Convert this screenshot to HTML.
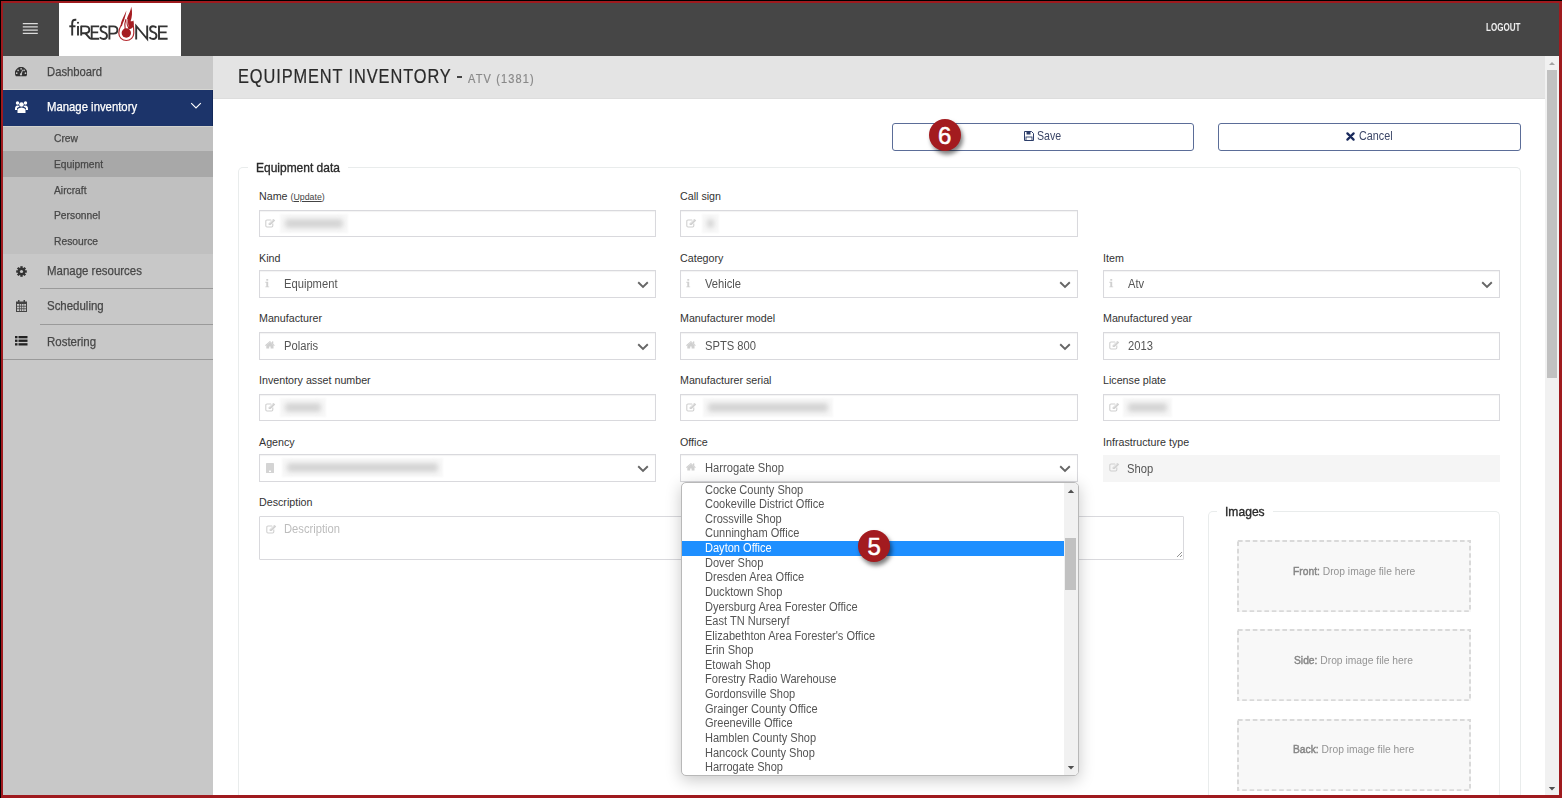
<!DOCTYPE html>
<html><head><meta charset="utf-8"><style>
html,body{margin:0;padding:0}
body{width:1562px;height:798px;overflow:hidden;background:#000;position:relative;font-family:"Liberation Sans", sans-serif}
.b{position:absolute}
.t{position:absolute;white-space:nowrap}
</style></head><body>
<div class="b" style="left:1px;top:1px;width:1561px;height:797px;background:#9f1a1e"></div>
<div class="b" style="left:3px;top:3px;width:1556px;height:53px;background:#464646"></div>
<svg class="b" style="left:22px;top:20px" width="17" height="16"><g stroke="#dcdcdc" stroke-width="1.25"><path d="M0.8 3.6 H15.8 M0.8 6.85 H15.8 M0.8 10.1 H15.8 M0.8 13.4 H15.8"/></g></svg>
<div class="b" style="left:59px;top:3px;width:122px;height:53px;background:#fff"></div>
<svg class="b" style="left:59px;top:3px" width="122" height="52" viewBox="59 3 122 52">
<g fill="none" stroke="#333" stroke-width="1.9" stroke-linecap="butt" stroke-linejoin="miter">
<path d="M72.2 35.6 V23.2 Q72.2 19.8 75.3 19.8 H76.3"/><path d="M69.3 26.3 H75.5"/>
<path d="M78 26 V35.6"/><circle cx="78" cy="22.8" r="1.05" fill="#333" stroke="none"/>
<path d="M81.2 25.7 V35.6"/><path d="M81.2 26.4 H85.4 Q89.3 26.4 89.3 29.8 Q89.3 33.2 85.4 33.2 H81.6"/>
<path d="M85.2 33.2 L89.6 38 Q90.4 38.8 91.8 38.8 H99.2"/>
<path d="M99.2 26.4 H91.7 V38.8 M91.7 32.4 H98.2"/>
<path d="M106.9 27.6 Q105.6 26.2 103.5 26.2 Q100.6 26.2 100.6 29 Q100.6 31.2 103.6 32.2 Q107 33.2 107 35.8 Q107 39 103.6 39 Q101.1 39 99.9 37.3"/>
<path d="M109.4 39.4 V26.4 H113.4 Q117.4 26.4 117.4 30 Q117.4 33.6 113.4 33.6 H109.4"/>
<path d="M136.2 39.4 V26 L147.2 39 V25.6"/>
<path d="M156.4 27.6 Q155.1 26.2 153 26.2 Q150.1 26.2 150.1 29 Q150.1 31.2 153.1 32.2 Q156.5 33.2 156.5 35.8 Q156.5 39 153.1 39 Q150.6 39 149.4 37.3"/>
<path d="M167.6 26.4 H159 V38.8 H167.6 M159 32.4 H166.6"/>
</g>
<path d="M121.2 25 C119.6 27.8 118.8 30.5 118.8 33 A7.5 7.5 0 0 0 133.8 33 C133.8 30.2 133.6 27.8 133.3 25.5" fill="none" stroke="#b52c31" stroke-width="1.2"/>
<circle cx="126.3" cy="33" r="4.7" fill="#a51d22"/>
<path d="M120.8 25.7 C120.6 21 124.2 16.5 126.3 10.4 C126.2 13.5 125.2 16 124.6 18.5 C124 21 122.6 23.5 121.8 26.5 Z" fill="#a51d22"/>
<path d="M133.6 26.5 C134.1 24.5 133.9 22.3 133.4 20.4 C132.6 21.1 131.6 21.4 130.6 21.2 C132.1 17 132.6 12 131.3 6.7 C130.6 11 128.6 14 127.5 17 C126.6 19.5 126.3 22.5 126.8 25 C127.3 26.5 128.3 28 128.6 29.5 C130.5 29 132.5 28 133.6 26.5 Z" fill="#a51d22"/>
<path d="M125.2 29 C124.6 25.5 124.8 22 125.9 19.3" fill="none" stroke="#a51d22" stroke-width="1.1"/>
<path d="M127.6 19 C127.2 21.5 127.6 24 128.6 26.5" fill="none" stroke="#fff" stroke-width="0.6" opacity="0.8"/>
</svg>
<div class="t" style="left:1486px;top:22.00px;font-size:10.2px;line-height:12px;color:#eeeeee;font-weight:bold;letter-spacing:0px;transform:scaleX(0.79);transform-origin:0 0;">LOGOUT</div>
<div class="b" style="left:3px;top:56px;width:210px;height:739px;background:#c8c8c8"></div>
<div class="b" style="left:3px;top:90px;width:209px;height:36px;background:#1c346a"></div>
<div class="b" style="left:212px;top:90px;width:1px;height:36px;background:#14295a"></div>
<div class="b" style="left:3px;top:126px;width:210px;height:128px;background:#c0c0c0"></div>
<div class="b" style="left:3px;top:89px;width:210px;height:1px;background:#d6d6d2"></div>
<div class="b" style="left:3px;top:126px;width:210px;height:1px;background:#d2d2ce"></div>
<div class="b" style="left:3px;top:151px;width:210px;height:26px;background:#a8a8a8"></div>
<div class="b" style="left:40px;top:288px;width:173px;height:1px;background:#9a9a9a"></div>
<div class="b" style="left:40px;top:324px;width:173px;height:1px;background:#9a9a9a"></div>
<div class="b" style="left:3px;top:359px;width:210px;height:1px;background:#9a9a9a"></div>
<div class="t" style="left:47.2px;top:65.00px;font-size:12.6px;line-height:15px;color:#474747;font-weight:normal;letter-spacing:0px;transform:scaleX(0.895);transform-origin:0 0;-webkit-text-stroke:0.25px #474747">Dashboard</div>
<div class="t" style="left:47.2px;top:100.00px;font-size:12.6px;line-height:15px;color:#ffffff;font-weight:normal;letter-spacing:0px;transform:scaleX(0.9);transform-origin:0 0;-webkit-text-stroke:0.25px #fff">Manage inventory</div>
<div class="t" style="left:53.5px;top:132.00px;font-size:10.6px;line-height:13px;color:#474747;font-weight:normal;letter-spacing:0px;transform:scaleX(0.97);transform-origin:0 0;-webkit-text-stroke:0.25px #474747">Crew</div>
<div class="t" style="left:53.5px;top:158.00px;font-size:10.6px;line-height:13px;color:#474747;font-weight:normal;letter-spacing:0px;transform:scaleX(0.97);transform-origin:0 0;-webkit-text-stroke:0.25px #474747">Equipment</div>
<div class="t" style="left:53.5px;top:184.00px;font-size:10.6px;line-height:13px;color:#474747;font-weight:normal;letter-spacing:0px;transform:scaleX(0.97);transform-origin:0 0;-webkit-text-stroke:0.25px #474747">Aircraft</div>
<div class="t" style="left:53.5px;top:209.00px;font-size:10.6px;line-height:13px;color:#474747;font-weight:normal;letter-spacing:0px;transform:scaleX(0.97);transform-origin:0 0;-webkit-text-stroke:0.25px #474747">Personnel</div>
<div class="t" style="left:53.5px;top:235.00px;font-size:10.6px;line-height:13px;color:#474747;font-weight:normal;letter-spacing:0px;transform:scaleX(0.97);transform-origin:0 0;-webkit-text-stroke:0.25px #474747">Resource</div>
<div class="t" style="left:47.2px;top:264.00px;font-size:12.6px;line-height:15px;color:#474747;font-weight:normal;letter-spacing:0px;transform:scaleX(0.91);transform-origin:0 0;-webkit-text-stroke:0.25px #474747">Manage resources</div>
<div class="t" style="left:47.2px;top:299.00px;font-size:12.6px;line-height:15px;color:#474747;font-weight:normal;letter-spacing:0px;transform:scaleX(0.91);transform-origin:0 0;-webkit-text-stroke:0.25px #474747">Scheduling</div>
<div class="t" style="left:47.2px;top:335.00px;font-size:12.6px;line-height:15px;color:#474747;font-weight:normal;letter-spacing:0px;transform:scaleX(0.91);transform-origin:0 0;-webkit-text-stroke:0.25px #474747">Rostering</div>
<svg class="b" style="left:15.2px;top:67.4px" width="12.2" height="9.3" viewBox="0 0 12.2 9.3">
<path d="M0.91 9.3 A6.1 6.1 0 1 1 11.29 9.3 Z" fill="#333"/>
<g fill="#c8c8c8"><circle cx="6.1" cy="1.8" r="0.85"/><circle cx="3.1" cy="3.3" r="0.85"/><circle cx="9.1" cy="3.3" r="0.85"/>
<circle cx="1.7" cy="6.2" r="0.85"/><circle cx="10.5" cy="6.2" r="0.85"/><circle cx="6" cy="7.4" r="1.1"/>
<path d="M5.5 7.2 L7.3 2.6 L8 2.9 L6.6 7.6Z"/></g>
</svg>
<svg class="b" style="left:15px;top:101px" width="13" height="12" viewBox="0 0 13 12">
<circle cx="6.5" cy="3.5" r="2.3" fill="#fff"/><circle cx="2.5" cy="2" r="1.7" fill="#fff"/><circle cx="10.5" cy="2" r="1.7" fill="#fff"/>
<path d="M2.5 12 L2.5 8 Q6.5 5 10.5 8 L10.5 12Z" fill="#fff"/>
<path d="M0 8 Q0 4.5 2.5 4.5 Q4.2 4.5 4.5 5.5 L2 7 L2 9 L0 9Z" fill="#fff"/>
<path d="M13 8 Q13 4.5 10.5 4.5 Q8.8 4.5 8.5 5.5 L11 7 L11 9 L13 9Z" fill="#fff"/>
</svg>
<svg class="b" style="left:16px;top:265.5px" width="11" height="11" viewBox="0 0 11 11">
<g fill="#333" transform="translate(5.5 5.5)">
<rect x="-1.2" y="-5.3" width="2.4" height="10.6"/><rect x="-1.2" y="-5.3" width="2.4" height="10.6" transform="rotate(45)"/>
<rect x="-1.2" y="-5.3" width="2.4" height="10.6" transform="rotate(90)"/><rect x="-1.2" y="-5.3" width="2.4" height="10.6" transform="rotate(135)"/>
<circle r="3.8"/></g><circle cx="5.5" cy="5.5" r="1.6" fill="#c8c8c8"/>
</svg>
<svg class="b" style="left:16px;top:299.5px" width="11" height="12" viewBox="0 0 11 12">
<rect x="0" y="1.5" width="11" height="10.5" fill="#444"/>
<rect x="2" y="0" width="1.5" height="3" fill="#444"/><rect x="7.5" y="0" width="1.5" height="3" fill="#444"/>
<g fill="#c8c8c8"><rect x="1" y="4" width="2" height="1.8"/><rect x="3.7" y="4" width="1.6" height="1.8"/><rect x="6" y="4" width="1.6" height="1.8"/><rect x="8.2" y="4" width="1.8" height="1.8"/>
<rect x="1" y="6.6" width="2" height="1.8"/><rect x="3.7" y="6.6" width="1.6" height="1.8"/><rect x="6" y="6.6" width="1.6" height="1.8"/><rect x="8.2" y="6.6" width="1.8" height="1.8"/>
<rect x="1" y="9.2" width="2" height="1.8"/><rect x="3.7" y="9.2" width="1.6" height="1.8"/><rect x="6" y="9.2" width="1.6" height="1.8"/><rect x="8.2" y="9.2" width="1.8" height="1.8"/></g>
</svg>
<svg class="b" style="left:15px;top:336px" width="13" height="10" viewBox="0 0 13 10">
<g fill="#222"><rect x="0" y="0" width="2.5" height="2.3"/><rect x="3.5" y="0" width="9" height="2.3"/>
<rect x="0" y="3.6" width="2.5" height="2.3"/><rect x="3.5" y="3.6" width="9" height="2.3"/>
<rect x="0" y="7.2" width="2.5" height="2.3"/><rect x="3.5" y="7.2" width="9" height="2.3"/></g>
</svg>
<svg class="b" style="left:190px;top:102px" width="12" height="8" viewBox="0 0 12 8">
<path d="M1.2 1.2 L6 6 L10.8 1.2" fill="none" stroke="#fff" stroke-width="1.15"/></svg>
<div class="b" style="left:213px;top:56px;width:1332px;height:42px;background:#e4e4e4"></div>
<div class="b" style="left:213px;top:99px;width:1332px;height:696px;background:#fff"></div>
<div class="b" style="left:213px;top:98px;width:1332px;height:1px;background:#dddddd"></div>
<div class="t" style="left:237.6px;top:65.00px;font-size:19.3px;line-height:23px;color:#2a2a2a;font-weight:normal;letter-spacing:1.05px;transform:scaleX(0.85);transform-origin:0 0;-webkit-text-stroke:0.2px #2a2a2a">EQUIPMENT INVENTORY</div>
<div class="b" style="left:457.3px;top:76.4px;width:5px;height:2px;background:#444"></div>
<div class="t" style="left:468px;top:72.00px;font-size:12.2px;line-height:15px;color:#888;font-weight:normal;letter-spacing:1.27px;transform:scaleX(0.9);transform-origin:0 0;-webkit-text-stroke:0.2px #888">ATV (1381)</div>
<div class="b" style="left:1545px;top:56px;width:14px;height:739px;background:#f1f1f1"></div>
<div class="b" style="left:1547px;top:70px;width:10px;height:308px;background:#c1c1c1"></div>
<svg class="b" style="left:1547px;top:59px" width="10" height="8"><path d="M2 6 L5 3 L8 6Z" fill="#a3a3a3"/></svg>
<svg class="b" style="left:1547px;top:784.5px" width="10" height="8"><path d="M1.8 2 L5 5.4 L8.2 2Z" fill="#505050"/></svg>
<div class="b" style="left:892px;top:123px;width:302px;height:28px;border:1px solid #5b6d98;border-radius:3px;box-sizing:border-box"></div>
<div class="b" style="left:1218px;top:123px;width:303px;height:28px;border:1px solid #5b6d98;border-radius:3px;box-sizing:border-box"></div>
<svg class="b" style="left:1024px;top:131px" width="10" height="10" viewBox="0 0 10 10">
<path d="M0.5 0.5 H7.5 L9.5 2.5 V9.5 H0.5 Z" fill="none" stroke="#2d3e6a" stroke-width="1"/>
<rect x="2.5" y="0.5" width="4" height="3" fill="#2d3e6a"/><rect x="2" y="6" width="6" height="3.5" fill="none" stroke="#2d3e6a" stroke-width="0.9"/>
</svg>
<div class="t" style="left:1037.3px;top:129.00px;font-size:12.2px;line-height:15px;color:#3c4768;font-weight:normal;letter-spacing:0px;transform:scaleX(0.87);transform-origin:0 0;">Save</div>
<svg class="b" style="left:1346.3px;top:131.8px" width="9" height="9" viewBox="0 0 9 9">
<path d="M1.4 1.4 L7.6 7.6 M7.6 1.4 L1.4 7.6" stroke="#1a2a5c" stroke-width="2.2" stroke-linecap="round"/></svg>
<div class="t" style="left:1358.6px;top:129.00px;font-size:12.3px;line-height:15px;color:#3c4768;font-weight:normal;letter-spacing:0px;transform:scaleX(0.877);transform-origin:0 0;">Cancel</div>
<div class="b" style="left:238px;top:167px;width:1283px;height:628px;border:1px solid #e9ecec;border-bottom:none;border-radius:5px 5px 0 0;box-sizing:border-box"></div>
<div class="b" style="left:248px;top:160px;width:100px;height:12px;background:#fff"></div>
<div class="t" style="left:255.6px;top:160.00px;font-size:13.2px;line-height:16px;color:#2a2a2a;font-weight:normal;letter-spacing:0px;transform:scaleX(0.908);transform-origin:0 0;-webkit-text-stroke:0.35px #2a2a2a">Equipment data</div>
<div class="t" style="left:259px;top:190.00px;font-size:10.7px;line-height:13px;color:#333;font-weight:normal;letter-spacing:0px;">Name <span style="font-size:8.8px;color:#444">(<u>Update</u>)</span></div>
<div class="b" style="left:259px;top:210px;width:397px;height:27px;border:1px solid #d9d9dd;box-sizing:border-box;background:#fff;box-shadow:inset 0 1px 1px rgba(0,0,0,0.05)"></div>
<svg class="b" style="left:264.8px;top:218.5px" width="11" height="9" viewBox="0 0 11 9">
<path d="M6.2 1 H2 Q0.8 1 0.8 2.2 V6.8 Q0.8 8 2 8 H6.6 Q7.8 8 7.8 6.8 V4.6" fill="none" stroke="#d0d0d0" stroke-width="1.1"/>
<path d="M3.6 6 L3.9 4.3 L8.4 -0.2 L10.2 1.4 L5.6 5.9 Z" fill="#d0d0d0"/><path d="M4.6 4.6 L8.6 0.6" stroke="#fff" stroke-width="0.5"/></svg>
<div class="b" style="left:279.5px;top:214px;width:68.5px;height:18.5px;background:#f8f8f8;filter:blur(0.8px)"></div>
<div class="b" style="left:284.5px;top:219px;width:58.5px;height:9px;background:#d4d4d4;filter:blur(2.4px);border-radius:3px"></div>
<div class="t" style="left:680px;top:190.00px;font-size:10.7px;line-height:13px;color:#333;font-weight:normal;letter-spacing:0px;">Call sign</div>
<div class="b" style="left:680px;top:210px;width:398px;height:27px;border:1px solid #d9d9dd;box-sizing:border-box;background:#fff;box-shadow:inset 0 1px 1px rgba(0,0,0,0.05)"></div>
<svg class="b" style="left:685.8px;top:218.5px" width="11" height="9" viewBox="0 0 11 9">
<path d="M6.2 1 H2 Q0.8 1 0.8 2.2 V6.8 Q0.8 8 2 8 H6.6 Q7.8 8 7.8 6.8 V4.6" fill="none" stroke="#d0d0d0" stroke-width="1.1"/>
<path d="M3.6 6 L3.9 4.3 L8.4 -0.2 L10.2 1.4 L5.6 5.9 Z" fill="#d0d0d0"/><path d="M4.6 4.6 L8.6 0.6" stroke="#fff" stroke-width="0.5"/></svg>
<div class="b" style="left:702px;top:214px;width:16.5px;height:18.5px;background:#f8f8f8;filter:blur(0.8px)"></div>
<div class="b" style="left:707px;top:219px;width:6.5px;height:9px;background:#d4d4d4;filter:blur(2.4px);border-radius:3px"></div>
<div class="t" style="left:259px;top:252.00px;font-size:10.7px;line-height:13px;color:#333;font-weight:normal;letter-spacing:0px;">Kind</div>
<div class="b" style="left:259px;top:270px;width:397px;height:28px;border:1px solid #d9d9dd;box-sizing:border-box;background:#fff;box-shadow:inset 0 1px 1px rgba(0,0,0,0.05)"></div>
<svg class="b" style="left:265.3px;top:279px" width="5" height="9" viewBox="0 0 5 9">
<rect x="1.3" y="0" width="1.9" height="1.7" fill="#d0d0d0"/><path d="M0.3 2.8 H3.2 V7.4 H4.2 V8.3 H0.3 V7.4 H1.3 V3.7 H0.3Z" fill="#d0d0d0"/></svg>
<div class="t" style="left:284.3px;top:277.00px;font-size:12.3px;line-height:15px;color:#555;font-weight:normal;letter-spacing:0px;transform:scaleX(0.91);transform-origin:0 0;">Equipment</div>
<svg class="b" style="left:636.5px;top:281px" width="12" height="8" viewBox="0 0 12 8">
<path d="M1.2 1.2 L6 5.9 L10.8 1.2" fill="none" stroke="#666" stroke-width="1.9"/></svg>
<div class="t" style="left:680px;top:252.00px;font-size:10.7px;line-height:13px;color:#333;font-weight:normal;letter-spacing:0px;">Category</div>
<div class="b" style="left:680px;top:270px;width:398px;height:28px;border:1px solid #d9d9dd;box-sizing:border-box;background:#fff;box-shadow:inset 0 1px 1px rgba(0,0,0,0.05)"></div>
<svg class="b" style="left:686.3px;top:279px" width="5" height="9" viewBox="0 0 5 9">
<rect x="1.3" y="0" width="1.9" height="1.7" fill="#d0d0d0"/><path d="M0.3 2.8 H3.2 V7.4 H4.2 V8.3 H0.3 V7.4 H1.3 V3.7 H0.3Z" fill="#d0d0d0"/></svg>
<div class="t" style="left:705.3px;top:277.00px;font-size:12.3px;line-height:15px;color:#555;font-weight:normal;letter-spacing:0px;transform:scaleX(0.91);transform-origin:0 0;">Vehicle</div>
<svg class="b" style="left:1058.5px;top:281px" width="12" height="8" viewBox="0 0 12 8">
<path d="M1.2 1.2 L6 5.9 L10.8 1.2" fill="none" stroke="#666" stroke-width="1.9"/></svg>
<div class="t" style="left:1103px;top:252.00px;font-size:10.7px;line-height:13px;color:#333;font-weight:normal;letter-spacing:0px;">Item</div>
<div class="b" style="left:1103px;top:270px;width:397px;height:28px;border:1px solid #d9d9dd;box-sizing:border-box;background:#fff;box-shadow:inset 0 1px 1px rgba(0,0,0,0.05)"></div>
<svg class="b" style="left:1109.3px;top:279px" width="5" height="9" viewBox="0 0 5 9">
<rect x="1.3" y="0" width="1.9" height="1.7" fill="#d0d0d0"/><path d="M0.3 2.8 H3.2 V7.4 H4.2 V8.3 H0.3 V7.4 H1.3 V3.7 H0.3Z" fill="#d0d0d0"/></svg>
<div class="t" style="left:1128.3px;top:277.00px;font-size:12.3px;line-height:15px;color:#555;font-weight:normal;letter-spacing:0px;transform:scaleX(0.91);transform-origin:0 0;">Atv</div>
<svg class="b" style="left:1480.5px;top:281px" width="12" height="8" viewBox="0 0 12 8">
<path d="M1.2 1.2 L6 5.9 L10.8 1.2" fill="none" stroke="#666" stroke-width="1.9"/></svg>
<div class="t" style="left:259px;top:312.00px;font-size:10.7px;line-height:13px;color:#333;font-weight:normal;letter-spacing:0px;">Manufacturer</div>
<div class="b" style="left:259px;top:332px;width:397px;height:28px;border:1px solid #d9d9dd;box-sizing:border-box;background:#fff;box-shadow:inset 0 1px 1px rgba(0,0,0,0.05)"></div>
<svg class="b" style="left:265.2px;top:341.3px" width="10" height="8" viewBox="0 0 10 8">
<path d="M0 4.2 L4.9 0 L9.8 4.2 L9.1 4.9 L4.9 1.3 L0.7 4.9Z" fill="#d0d0d0"/><path d="M1.3 4.2 L4.9 1.2 L8.5 4.2 V7.6 H5.6 V5.6 H4.2 V7.6 H1.3Z" fill="#d0d0d0"/><rect x="7" y="0.4" width="1.3" height="2.4" fill="#d0d0d0"/></svg>
<div class="t" style="left:284.3px;top:339.00px;font-size:12.3px;line-height:15px;color:#555;font-weight:normal;letter-spacing:0px;transform:scaleX(0.91);transform-origin:0 0;">Polaris</div>
<svg class="b" style="left:636.5px;top:343px" width="12" height="8" viewBox="0 0 12 8">
<path d="M1.2 1.2 L6 5.9 L10.8 1.2" fill="none" stroke="#666" stroke-width="1.9"/></svg>
<div class="t" style="left:680px;top:312.00px;font-size:10.7px;line-height:13px;color:#333;font-weight:normal;letter-spacing:0px;">Manufacturer model</div>
<div class="b" style="left:680px;top:332px;width:398px;height:28px;border:1px solid #d9d9dd;box-sizing:border-box;background:#fff;box-shadow:inset 0 1px 1px rgba(0,0,0,0.05)"></div>
<svg class="b" style="left:686.2px;top:341.3px" width="10" height="8" viewBox="0 0 10 8">
<path d="M0 4.2 L4.9 0 L9.8 4.2 L9.1 4.9 L4.9 1.3 L0.7 4.9Z" fill="#d0d0d0"/><path d="M1.3 4.2 L4.9 1.2 L8.5 4.2 V7.6 H5.6 V5.6 H4.2 V7.6 H1.3Z" fill="#d0d0d0"/><rect x="7" y="0.4" width="1.3" height="2.4" fill="#d0d0d0"/></svg>
<div class="t" style="left:705.3px;top:339.00px;font-size:12.3px;line-height:15px;color:#555;font-weight:normal;letter-spacing:0px;transform:scaleX(0.91);transform-origin:0 0;">SPTS 800</div>
<svg class="b" style="left:1058.5px;top:343px" width="12" height="8" viewBox="0 0 12 8">
<path d="M1.2 1.2 L6 5.9 L10.8 1.2" fill="none" stroke="#666" stroke-width="1.9"/></svg>
<div class="t" style="left:1103px;top:312.00px;font-size:10.7px;line-height:13px;color:#333;font-weight:normal;letter-spacing:0px;">Manufactured year</div>
<div class="b" style="left:1103px;top:332px;width:397px;height:28px;border:1px solid #d9d9dd;box-sizing:border-box;background:#fff;box-shadow:inset 0 1px 1px rgba(0,0,0,0.05)"></div>
<svg class="b" style="left:1108.8px;top:340.5px" width="11" height="9" viewBox="0 0 11 9">
<path d="M6.2 1 H2 Q0.8 1 0.8 2.2 V6.8 Q0.8 8 2 8 H6.6 Q7.8 8 7.8 6.8 V4.6" fill="none" stroke="#d0d0d0" stroke-width="1.1"/>
<path d="M3.6 6 L3.9 4.3 L8.4 -0.2 L10.2 1.4 L5.6 5.9 Z" fill="#d0d0d0"/><path d="M4.6 4.6 L8.6 0.6" stroke="#fff" stroke-width="0.5"/></svg>
<div class="t" style="left:1128.3px;top:339.00px;font-size:12.3px;line-height:15px;color:#555;font-weight:normal;letter-spacing:0px;transform:scaleX(0.91);transform-origin:0 0;">2013</div>
<div class="t" style="left:259px;top:374.00px;font-size:10.7px;line-height:13px;color:#333;font-weight:normal;letter-spacing:0px;">Inventory asset number</div>
<div class="b" style="left:259px;top:394px;width:397px;height:27px;border:1px solid #d9d9dd;box-sizing:border-box;background:#fff;box-shadow:inset 0 1px 1px rgba(0,0,0,0.05)"></div>
<svg class="b" style="left:264.8px;top:402.5px" width="11" height="9" viewBox="0 0 11 9">
<path d="M6.2 1 H2 Q0.8 1 0.8 2.2 V6.8 Q0.8 8 2 8 H6.6 Q7.8 8 7.8 6.8 V4.6" fill="none" stroke="#d0d0d0" stroke-width="1.1"/>
<path d="M3.6 6 L3.9 4.3 L8.4 -0.2 L10.2 1.4 L5.6 5.9 Z" fill="#d0d0d0"/><path d="M4.6 4.6 L8.6 0.6" stroke="#fff" stroke-width="0.5"/></svg>
<div class="b" style="left:280.3px;top:398px;width:46px;height:18.5px;background:#f8f8f8;filter:blur(0.8px)"></div>
<div class="b" style="left:285.3px;top:403px;width:36px;height:9px;background:#d4d4d4;filter:blur(2.4px);border-radius:3px"></div>
<div class="t" style="left:680px;top:374.00px;font-size:10.7px;line-height:13px;color:#333;font-weight:normal;letter-spacing:0px;">Manufacturer serial</div>
<div class="b" style="left:680px;top:394px;width:398px;height:27px;border:1px solid #d9d9dd;box-sizing:border-box;background:#fff;box-shadow:inset 0 1px 1px rgba(0,0,0,0.05)"></div>
<svg class="b" style="left:685.8px;top:402.5px" width="11" height="9" viewBox="0 0 11 9">
<path d="M6.2 1 H2 Q0.8 1 0.8 2.2 V6.8 Q0.8 8 2 8 H6.6 Q7.8 8 7.8 6.8 V4.6" fill="none" stroke="#d0d0d0" stroke-width="1.1"/>
<path d="M3.6 6 L3.9 4.3 L8.4 -0.2 L10.2 1.4 L5.6 5.9 Z" fill="#d0d0d0"/><path d="M4.6 4.6 L8.6 0.6" stroke="#fff" stroke-width="0.5"/></svg>
<div class="b" style="left:703px;top:398px;width:129.7px;height:18.5px;background:#f8f8f8;filter:blur(0.8px)"></div>
<div class="b" style="left:708px;top:403px;width:119.69999999999999px;height:9px;background:#d4d4d4;filter:blur(2.4px);border-radius:3px"></div>
<div class="t" style="left:1103px;top:374.00px;font-size:10.7px;line-height:13px;color:#333;font-weight:normal;letter-spacing:0px;">License plate</div>
<div class="b" style="left:1103px;top:394px;width:397px;height:27px;border:1px solid #d9d9dd;box-sizing:border-box;background:#fff;box-shadow:inset 0 1px 1px rgba(0,0,0,0.05)"></div>
<svg class="b" style="left:1108.8px;top:402.5px" width="11" height="9" viewBox="0 0 11 9">
<path d="M6.2 1 H2 Q0.8 1 0.8 2.2 V6.8 Q0.8 8 2 8 H6.6 Q7.8 8 7.8 6.8 V4.6" fill="none" stroke="#d0d0d0" stroke-width="1.1"/>
<path d="M3.6 6 L3.9 4.3 L8.4 -0.2 L10.2 1.4 L5.6 5.9 Z" fill="#d0d0d0"/><path d="M4.6 4.6 L8.6 0.6" stroke="#fff" stroke-width="0.5"/></svg>
<div class="b" style="left:1123px;top:398px;width:49.3px;height:18.5px;background:#f8f8f8;filter:blur(0.8px)"></div>
<div class="b" style="left:1128px;top:403px;width:39.3px;height:9px;background:#d4d4d4;filter:blur(2.4px);border-radius:3px"></div>
<div class="t" style="left:259px;top:436.00px;font-size:10.7px;line-height:13px;color:#333;font-weight:normal;letter-spacing:0px;">Agency</div>
<div class="b" style="left:259px;top:454px;width:397px;height:28px;border:1px solid #d9d9dd;box-sizing:border-box;background:#fff;box-shadow:inset 0 1px 1px rgba(0,0,0,0.05)"></div>
<svg class="b" style="left:265.8px;top:462.5px" width="8" height="10.2" viewBox="0 0 8 10.2">
<rect x="0" y="0" width="8" height="10.2" rx="0.6" fill="#d4d4d4"/><rect x="3" y="7.6" width="2" height="1.4" fill="#fff"/></svg>
<div class="b" style="left:281.7px;top:458px;width:161.3px;height:18.5px;background:#f8f8f8;filter:blur(0.8px)"></div>
<div class="b" style="left:286.7px;top:463px;width:151.3px;height:9px;background:#d4d4d4;filter:blur(2.4px);border-radius:3px"></div>
<svg class="b" style="left:636.5px;top:465px" width="12" height="8" viewBox="0 0 12 8">
<path d="M1.2 1.2 L6 5.9 L10.8 1.2" fill="none" stroke="#666" stroke-width="1.9"/></svg>
<div class="t" style="left:680px;top:436.00px;font-size:10.7px;line-height:13px;color:#333;font-weight:normal;letter-spacing:0px;">Office</div>
<div class="b" style="left:680px;top:454px;width:398px;height:28px;border:1px solid #d9d9dd;box-sizing:border-box;background:#fff;box-shadow:inset 0 1px 1px rgba(0,0,0,0.05)"></div>
<svg class="b" style="left:686.2px;top:463.3px" width="10" height="8" viewBox="0 0 10 8">
<path d="M0 4.2 L4.9 0 L9.8 4.2 L9.1 4.9 L4.9 1.3 L0.7 4.9Z" fill="#d0d0d0"/><path d="M1.3 4.2 L4.9 1.2 L8.5 4.2 V7.6 H5.6 V5.6 H4.2 V7.6 H1.3Z" fill="#d0d0d0"/><rect x="7" y="0.4" width="1.3" height="2.4" fill="#d0d0d0"/></svg>
<div class="t" style="left:705.3px;top:461.00px;font-size:12.3px;line-height:15px;color:#555;font-weight:normal;letter-spacing:0px;transform:scaleX(0.91);transform-origin:0 0;">Harrogate Shop</div>
<svg class="b" style="left:1058.5px;top:465px" width="12" height="8" viewBox="0 0 12 8">
<path d="M1.2 1.2 L6 5.9 L10.8 1.2" fill="none" stroke="#666" stroke-width="1.9"/></svg>
<div class="t" style="left:1103px;top:436.00px;font-size:10.7px;line-height:13px;color:#333;font-weight:normal;letter-spacing:0px;">Infrastructure type</div>
<div class="b" style="left:1103px;top:454.5px;width:397px;height:27.5px;background:#f5f5f5"></div>
<svg class="b" style="left:1108.8px;top:462.5px" width="11" height="9" viewBox="0 0 11 9">
<path d="M6.2 1 H2 Q0.8 1 0.8 2.2 V6.8 Q0.8 8 2 8 H6.6 Q7.8 8 7.8 6.8 V4.6" fill="none" stroke="#d0d0d0" stroke-width="1.1"/>
<path d="M3.6 6 L3.9 4.3 L8.4 -0.2 L10.2 1.4 L5.6 5.9 Z" fill="#d0d0d0"/><path d="M4.6 4.6 L8.6 0.6" stroke="#fff" stroke-width="0.5"/></svg>
<div class="t" style="left:1127px;top:462.00px;font-size:12.3px;line-height:15px;color:#555;font-weight:normal;letter-spacing:0px;transform:scaleX(0.91);transform-origin:0 0;">Shop</div>
<div class="t" style="left:259px;top:496.00px;font-size:10.7px;line-height:13px;color:#333;font-weight:normal;letter-spacing:0px;">Description</div>
<div class="b" style="left:259px;top:516px;width:925px;height:44px;border:1px solid #d9d9dd;border-radius:1px;box-sizing:border-box;background:#fff"></div>
<svg class="b" style="left:265.5px;top:524.5px" width="11" height="9" viewBox="0 0 11 9">
<path d="M6.2 1 H2 Q0.8 1 0.8 2.2 V6.8 Q0.8 8 2 8 H6.6 Q7.8 8 7.8 6.8 V4.6" fill="none" stroke="#d0d0d0" stroke-width="1.1"/>
<path d="M3.6 6 L3.9 4.3 L8.4 -0.2 L10.2 1.4 L5.6 5.9 Z" fill="#d0d0d0"/><path d="M4.6 4.6 L8.6 0.6" stroke="#fff" stroke-width="0.5"/></svg>
<div class="t" style="left:283.8px;top:522.00px;font-size:12.3px;line-height:15px;color:#bdbdbd;font-weight:normal;letter-spacing:0px;transform:scaleX(0.91);transform-origin:0 0;">Description</div>
<svg class="b" style="left:1175px;top:550px" width="8" height="8"><path d="M7 2 L2 7 M7 5 L5 7" stroke="#777" stroke-width="0.8"/></svg>
<div class="b" style="left:1208.3px;top:510.5px;width:292px;height:290px;border:1px solid #e9ecec;border-bottom:none;border-radius:5px 5px 0 0;box-sizing:border-box"></div>
<div class="b" style="left:1217px;top:503px;width:56px;height:12px;background:#fff"></div>
<div class="t" style="left:1225.3px;top:504.00px;font-size:13.2px;line-height:16px;color:#2a2a2a;font-weight:normal;letter-spacing:0px;transform:scaleX(0.917);transform-origin:0 0;-webkit-text-stroke:0.35px #2a2a2a">Images</div>
<div class="b" style="left:1237px;top:539.7px;width:234px;height:72.2px;background:#f8f8f8"></div>
<svg class="b" style="left:1237px;top:539.7px" width="234" height="72.2"><rect x="1" y="1" width="232" height="70.2" fill="none" stroke="#d9d9d9" stroke-width="2" stroke-dasharray="4.6 2.8"/></svg>
<div class="t" style="left:1292.64px;top:564.00px;font-size:11.3px;line-height:14px;color:#949494;font-weight:normal;letter-spacing:0px;transform:scaleX(0.91);transform-origin:0 0;"><span style="color:#858585;-webkit-text-stroke:0.45px #858585">Front:</span> Drop image file here</div>
<div class="b" style="left:1237px;top:629.1500000000001px;width:234px;height:72.2px;background:#f8f8f8"></div>
<svg class="b" style="left:1237px;top:629.1500000000001px" width="234" height="72.2"><rect x="1" y="1" width="232" height="70.2" fill="none" stroke="#d9d9d9" stroke-width="2" stroke-dasharray="4.6 2.8"/></svg>
<div class="t" style="left:1294.35px;top:653.00px;font-size:11.3px;line-height:14px;color:#949494;font-weight:normal;letter-spacing:0px;transform:scaleX(0.91);transform-origin:0 0;"><span style="color:#858585;-webkit-text-stroke:0.45px #858585">Side:</span> Drop image file here</div>
<div class="b" style="left:1237px;top:718.6px;width:234px;height:72.2px;background:#f8f8f8"></div>
<svg class="b" style="left:1237px;top:718.6px" width="234" height="72.2"><rect x="1" y="1" width="232" height="70.2" fill="none" stroke="#d9d9d9" stroke-width="2" stroke-dasharray="4.6 2.8"/></svg>
<div class="t" style="left:1293.21px;top:742.00px;font-size:11.3px;line-height:14px;color:#949494;font-weight:normal;letter-spacing:0px;transform:scaleX(0.91);transform-origin:0 0;"><span style="color:#858585;-webkit-text-stroke:0.45px #858585">Back:</span> Drop image file here</div>
<div class="b" style="left:680.5px;top:482.3px;width:398px;height:293.7px;border:1px solid #b8b8b8;border-radius:5px;box-sizing:border-box;background:#fff;box-shadow:0 4px 16px rgba(0,0,0,0.22)"></div>
<div class="t" style="left:705px;top:483.00px;font-size:12px;line-height:14px;color:#555;font-weight:normal;letter-spacing:0px;transform:scaleX(0.92);transform-origin:0 0;">Cocke County Shop</div>
<div class="t" style="left:705px;top:497.00px;font-size:12px;line-height:14px;color:#555;font-weight:normal;letter-spacing:0px;transform:scaleX(0.92);transform-origin:0 0;">Cookeville District Office</div>
<div class="t" style="left:705px;top:512.00px;font-size:12px;line-height:14px;color:#555;font-weight:normal;letter-spacing:0px;transform:scaleX(0.92);transform-origin:0 0;">Crossville Shop</div>
<div class="t" style="left:705px;top:526.00px;font-size:12px;line-height:14px;color:#555;font-weight:normal;letter-spacing:0px;transform:scaleX(0.92);transform-origin:0 0;">Cunningham Office</div>
<div class="b" style="left:682px;top:541.0px;width:382px;height:14.7px;background:#1e8fff"></div>
<div class="t" style="left:705px;top:541.00px;font-size:12px;line-height:14px;color:#fff;font-weight:normal;letter-spacing:0px;transform:scaleX(0.92);transform-origin:0 0;">Dayton Office</div>
<div class="t" style="left:705px;top:556.00px;font-size:12px;line-height:14px;color:#555;font-weight:normal;letter-spacing:0px;transform:scaleX(0.92);transform-origin:0 0;">Dover Shop</div>
<div class="t" style="left:705px;top:570.00px;font-size:12px;line-height:14px;color:#555;font-weight:normal;letter-spacing:0px;transform:scaleX(0.92);transform-origin:0 0;">Dresden Area Office</div>
<div class="t" style="left:705px;top:585.00px;font-size:12px;line-height:14px;color:#555;font-weight:normal;letter-spacing:0px;transform:scaleX(0.92);transform-origin:0 0;">Ducktown Shop</div>
<div class="t" style="left:705px;top:600.00px;font-size:12px;line-height:14px;color:#555;font-weight:normal;letter-spacing:0px;transform:scaleX(0.92);transform-origin:0 0;">Dyersburg Area Forester Office</div>
<div class="t" style="left:705px;top:614.00px;font-size:12px;line-height:14px;color:#555;font-weight:normal;letter-spacing:0px;transform:scaleX(0.92);transform-origin:0 0;">East TN Nurseryf</div>
<div class="t" style="left:705px;top:629.00px;font-size:12px;line-height:14px;color:#555;font-weight:normal;letter-spacing:0px;transform:scaleX(0.92);transform-origin:0 0;">Elizabethton Area Forester's Office</div>
<div class="t" style="left:705px;top:643.00px;font-size:12px;line-height:14px;color:#555;font-weight:normal;letter-spacing:0px;transform:scaleX(0.92);transform-origin:0 0;">Erin Shop</div>
<div class="t" style="left:705px;top:658.00px;font-size:12px;line-height:14px;color:#555;font-weight:normal;letter-spacing:0px;transform:scaleX(0.92);transform-origin:0 0;">Etowah Shop</div>
<div class="t" style="left:705px;top:672.00px;font-size:12px;line-height:14px;color:#555;font-weight:normal;letter-spacing:0px;transform:scaleX(0.92);transform-origin:0 0;">Forestry Radio Warehouse</div>
<div class="t" style="left:705px;top:687.00px;font-size:12px;line-height:14px;color:#555;font-weight:normal;letter-spacing:0px;transform:scaleX(0.92);transform-origin:0 0;">Gordonsville Shop</div>
<div class="t" style="left:705px;top:702.00px;font-size:12px;line-height:14px;color:#555;font-weight:normal;letter-spacing:0px;transform:scaleX(0.92);transform-origin:0 0;">Grainger County Office</div>
<div class="t" style="left:705px;top:716.00px;font-size:12px;line-height:14px;color:#555;font-weight:normal;letter-spacing:0px;transform:scaleX(0.92);transform-origin:0 0;">Greeneville Office</div>
<div class="t" style="left:705px;top:731.00px;font-size:12px;line-height:14px;color:#555;font-weight:normal;letter-spacing:0px;transform:scaleX(0.92);transform-origin:0 0;">Hamblen County Shop</div>
<div class="t" style="left:705px;top:746.00px;font-size:12px;line-height:14px;color:#555;font-weight:normal;letter-spacing:0px;transform:scaleX(0.92);transform-origin:0 0;">Hancock County Shop</div>
<div class="t" style="left:705px;top:760.00px;font-size:12px;line-height:14px;color:#555;font-weight:normal;letter-spacing:0px;transform:scaleX(0.92);transform-origin:0 0;">Harrogate Shop</div>
<div class="b" style="left:1064px;top:483px;width:13.5px;height:292px;background:#f1f1f1;border-radius:0 4px 4px 0"></div>
<div class="b" style="left:1065.3px;top:538.2px;width:10.7px;height:52.3px;background:#c1c1c1"></div>
<svg class="b" style="left:1066px;top:486.5px" width="10" height="8"><path d="M1.8 6 L5 2.6 L8.2 6Z" fill="#505050"/></svg>
<svg class="b" style="left:1065.6px;top:763.7px" width="10" height="8"><path d="M1.8 2 L5 5.4 L8.2 2Z" fill="#505050"/></svg>
<div class="b" style="left:928.6px;top:119px;width:32px;height:32px;border-radius:50%;background:#a31b1f;box-shadow:2px 3.5px 4.5px rgba(0,0,0,0.5)"></div>
<div class="t" style="left:928.6px;top:120px;width:32px;height:32px;line-height:32px;text-align:center;font-size:24px;color:#fff;-webkit-text-stroke:0.5px #fff">6</div>
<div class="b" style="left:858.2px;top:530.1px;width:32px;height:32px;border-radius:50%;background:#a31b1f;box-shadow:2px 3.5px 4.5px rgba(0,0,0,0.5)"></div>
<div class="t" style="left:858.2px;top:531.1px;width:32px;height:32px;line-height:32px;text-align:center;font-size:24px;color:#fff;-webkit-text-stroke:0.5px #fff">5</div>
<div class="b" style="left:1px;top:1px;width:1561px;height:2px;background:#9f1a1e"></div>
<div class="b" style="left:1px;top:795px;width:1561px;height:3px;background:#9f1a1e"></div>
<div class="b" style="left:1px;top:1px;width:2px;height:797px;background:#9f1a1e"></div>
<div class="b" style="left:1559px;top:1px;width:3px;height:797px;background:#9f1a1e"></div>
</body></html>
